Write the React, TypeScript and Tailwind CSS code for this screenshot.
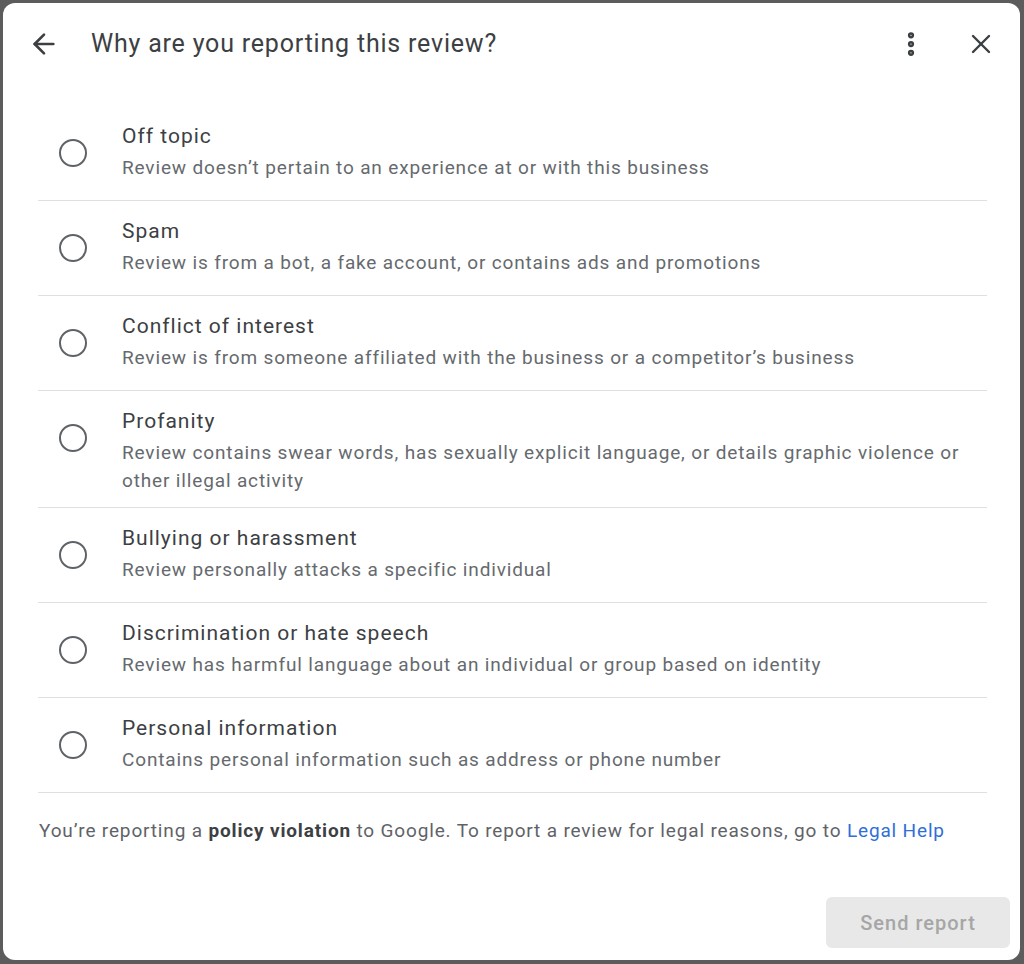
import { ArrowLeft, EllipsisVertical, X } from 'lucide-react';

const reasons = [
  {
    title: 'Off topic',
    desc: 'Review doesn’t pertain to an experience at or with this business',
  },
  {
    title: 'Spam',
    desc: 'Review is from a bot, a fake account, or contains ads and promotions',
  },
  {
    title: 'Conflict of interest',
    desc: 'Review is from someone affiliated with the business or a competitor’s business',
  },
  {
    title: 'Profanity',
    desc: 'Review contains swear words, has sexually explicit language, or details graphic violence or other illegal activity',
  },
  {
    title: 'Bullying or harassment',
    desc: 'Review personally attacks a specific individual',
  },
  {
    title: 'Discrimination or hate speech',
    desc: 'Review has harmful language about an individual or group based on identity',
  },
  {
    title: 'Personal information',
    desc: 'Contains personal information such as address or phone number',
  },
];

function ReasonRow({ title, desc }: { title: string; desc: string }) {
  return (
    <label className="flex items-start min-h-[95px] border-b border-[#e0e0e0] pt-4 pb-[12px] cursor-pointer">
      {/* Radio */}
      <div className="shrink-0 pl-[21px] pr-[35px] pt-[17px]">
        <div className="w-[28px] h-[28px] rounded-full border-2 border-[#5f6368]" />
      </div>
      {/* Text */}
      <div className="flex-1 pr-4">
        <div className="text-[21px] leading-[28px] text-[#3c4043] tracking-[1px]">{title}</div>
        <div className="mt-1 text-[19px] leading-[28px] text-[#666a6e] tracking-[0.85px]">{desc}</div>
      </div>
    </label>
  );
}

export default function App() {
  return (
    <div
      className="w-[1024px] h-[964px] bg-[#5c5c5c] pt-[3px] pl-[3px] pr-[4px] pb-[4px]"
      style={{ fontFamily: 'Roboto, "Liberation Sans", sans-serif' }}
    >
      <div className="h-full bg-white rounded-[12px] flex flex-col">
        {/* Header */}
        <div className="flex items-center h-[80px] pt-[1px] pl-[23px] pr-[21px]">
          <button className="w-[36px] h-[36px] flex items-center justify-center text-[#3c4043]">
            <ArrowLeft className="w-[32px] h-[32px]" strokeWidth={2} />
          </button>
          <h2 className="ml-[29px] flex-1 text-[25px] text-[#3c4043] tracking-[0.8px]">
            Why are you reporting this review?
          </h2>
          <button className="w-[36px] h-[36px] flex items-center justify-center text-[#3c4043]">
            <EllipsisVertical className="w-[30px] h-[30px]" strokeWidth={3} />
          </button>
          <button className="ml-[34px] w-[36px] h-[36px] flex items-center justify-center text-[#3c4043]">
            <X className="w-[32px] h-[32px]" strokeWidth={1.8} />
          </button>
        </div>

        {/* Reasons list */}
        <div className="mt-[23px] ml-[35px] mr-[33px]">
          {reasons.map((r) => (
            <ReasonRow key={r.title} title={r.title} desc={r.desc} />
          ))}
        </div>

        {/* Legal notice */}
        <p className="mt-[24px] pl-[36px] text-[19px] leading-[28px] text-[#5f6368] tracking-[0.84px]">
          You’re reporting a <span className="font-bold text-[#3c4043]">policy violation</span> to
          Google. To report a review for legal reasons, go to{' '}
          <a className="text-[#2f6fd6]">Legal Help</a>
        </p>

        <div className="flex-1" />

        {/* Footer */}
        <div className="flex justify-end pr-[10px] pb-[12px]">
          <button className="w-[184px] h-[51px] rounded-[6px] bg-[#e8e8e8] text-[20px] font-medium text-[#a6a6a6] tracking-[1px]">
            Send report
          </button>
        </div>
      </div>
    </div>
  );
}
